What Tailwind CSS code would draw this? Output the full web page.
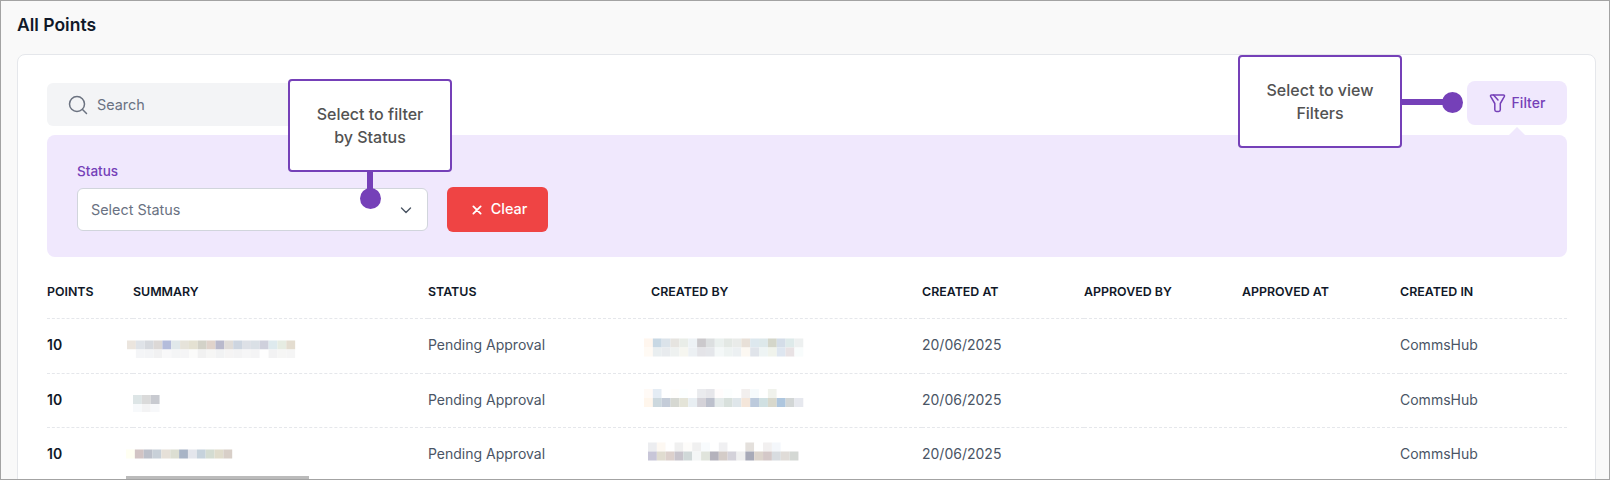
<!DOCTYPE html>
<html lang="en">
<head>
  <meta charset="UTF-8">
  <title>All Points</title>
  <script src="https://cdn.jsdelivr.net/npm/@tailwindcss/browser@4"></script>
</head>
<body class="font-[Inter,sans-serif]">
  <div class="relative h-[480px] overflow-hidden border border-[#a3a3a3] bg-[#f9f9f9]">
    <h1 class="pl-4 pt-3 text-[17.5px] leading-6 font-semibold text-gray-900">All Points</h1>

    <!-- card -->
    <div class="ml-4 mr-[13px] mt-[17px] h-[500px] rounded-lg border border-gray-200 bg-white pl-[29px] pr-[28px] pt-[28px]">
      <!-- toolbar -->
      <div class="flex h-[44px] items-start justify-between">
        <div class="flex h-[43px] w-[360px] items-center gap-[9px] rounded-md bg-gray-100 pl-[21px] text-[14.4px] text-gray-500">
          <svg class="h-[20px] w-[20px]" viewBox="0 0 20 20" fill="none" stroke="#6b7280" stroke-width="1.5" stroke-linecap="round"><circle cx="9" cy="9" r="7.5"/><path d="M14.5 14.5 18.5 18.5"/></svg>
          <span>Search</span>
        </div>
        <button class="relative -mt-[2px] flex h-[44px] w-[100px] items-center justify-center gap-[6px] rounded-lg bg-[#f0e8fd] text-sm font-medium text-[#7540b8]">
          <svg class="h-[20px] w-[17px]" viewBox="0 0 17 20" fill="none" stroke="#7540b8" stroke-width="1.5" stroke-linejoin="round" stroke-linecap="round"><path d="M2.500 2h12c.8 0 1.200.7.9 1.400L11.300 10.500V16.800c0 1-.8 1.700-1.700 1.700H7.500c-1 0-1.700-.7-1.700-1.700v-6.300L1.600 3.400C1.300 2.700 1.700 2 2.500 2Z"/><path d="M4.500 2 9 7"/></svg>
          <span>Filter</span>
          <span class="absolute left-[42px] top-[46px] h-0 w-0 border-x-[8px] border-b-[8px] border-x-transparent border-b-[#f0e8fd]"></span>
        </button>
      </div>

      <!-- filter panel -->
      <div class="mt-[8px] flex h-[122px] items-end gap-[19px] rounded-lg bg-[#f0e8fd] pb-[26px] pl-[30px]">
        <div>
          <label class="mb-[7px] block text-[13.5px] leading-5 font-medium text-[#7540b8]">Status</label>
          <div class="flex h-[43px] w-[351px] items-center justify-between rounded-md border border-gray-300 bg-white pl-[13px] pr-[14px] text-[14.4px] text-gray-500">
            <span>Select Status</span>
            <svg class="h-[14px] w-[14px]" viewBox="0 0 14 14" fill="none" stroke="#4b5563" stroke-width="1.4" stroke-linecap="round" stroke-linejoin="round"><path d="M2.500 5 7 9.500 11.500 5"/></svg>
          </div>
        </div>
        <button class="-mb-px flex h-[45px] w-[101px] items-center justify-center gap-[9px] rounded-md bg-[#ef4444] pl-[4px] pb-[2px] text-[14.4px] font-medium text-white">
          <svg class="mt-[2px] h-[10px] w-[10px]" viewBox="0 0 11 11" fill="none" stroke="#fff" stroke-width="2" stroke-linecap="round"><path d="M1.500 1.500 9.500 9.500M9.500 1.500 1.500 9.500"/></svg>
          <span>Clear</span>
        </button>
      </div>

      <!-- table -->
      <table class="mt-[8px] w-[1520px] table-fixed border-collapse text-sm text-gray-600">
        <colgroup>
          <col class="w-[86px]"><col class="w-[295px]"><col class="w-[223px]"><col class="w-[271px]"><col class="w-[162px]"><col class="w-[158px]"><col class="w-[158px]"><col class="w-[167px]">
        </colgroup>
        <thead>
          <tr class="h-[53px] border-b border-dashed border-gray-200 text-left text-[12.4px] font-semibold text-gray-900">
            <th class="pt-[2px] font-semibold">POINTS</th>
            <th class="pt-[2px] font-semibold">SUMMARY</th>
            <th class="pt-[2px] font-semibold">STATUS</th>
            <th class="pt-[2px] font-semibold">CREATED BY</th>
            <th class="pt-[2px] font-semibold">CREATED AT</th>
            <th class="pt-[2px] font-semibold">APPROVED BY</th>
            <th class="pt-[2px] font-semibold">APPROVED AT</th>
            <th class="pt-[2px] font-semibold">CREATED IN</th>
          </tr>
        </thead>
        <tbody>
          <tr class="h-[55px] border-b border-dashed border-gray-200">
            <td class="pb-[2px] font-semibold text-gray-900">10</td>
            <td><svg class="mosaic block h-[24px] w-[200px] -ml-[6px]" data-cell="s1"></svg></td>
            <td class="pb-[2px]">Pending Approval</td>
            <td><svg class="mosaic block h-[24px] w-[200px] -ml-[7px]" data-cell="c1"></svg></td>
            <td class="pb-[2px]">20/06/2025</td>
            <td></td>
            <td></td>
            <td class="pb-[2px]">CommsHub</td>
          </tr>
          <tr class="h-[54px] border-b border-dashed border-gray-200">
            <td class="font-semibold text-gray-900">10</td>
            <td><svg class="mosaic block h-[24px] w-[200px]" data-cell="s2"></svg></td>
            <td>Pending Approval</td>
            <td><svg class="mosaic block h-[24px] w-[200px] -ml-[7px]" data-cell="c2"></svg></td>
            <td>20/06/2025</td>
            <td></td>
            <td></td>
            <td>CommsHub</td>
          </tr>
          <tr class="h-[54px]">
            <td class="font-semibold text-gray-900">10</td>
            <td><svg class="mosaic block h-[24px] w-[200px] -ml-[7px]" data-cell="s3"></svg></td>
            <td>Pending Approval</td>
            <td><svg class="mosaic block h-[24px] w-[200px] -ml-[3px]" data-cell="c3"></svg></td>
            <td>20/06/2025</td>
            <td></td>
            <td></td>
            <td>CommsHub</td>
          </tr>
        </tbody>
      </table>
    </div>

    <!-- horizontal scrollbar thumb -->
    <div class="absolute bottom-0 left-[125px] h-[3px] w-[183px] bg-[#bbbbbb]"></div>

    <!-- callout: status -->
    <div class="absolute left-[287px] top-[78px] flex h-[93px] w-[164px] items-center justify-center rounded-[4px] border-2 border-[#7540b8] bg-white text-center text-base leading-[23px] font-medium text-neutral-600">Select to filter<br>by Status</div>
    <div class="absolute left-[366px] top-[170px] h-[20px] w-[6px] bg-[#7540b8]"></div>
    <div class="absolute left-[359px] top-[187px] h-[21px] w-[21px] rounded-full bg-[#7540b8]"></div>

    <!-- callout: filter -->
    <div class="absolute left-[1237px] top-[54px] flex h-[93px] w-[164px] items-center justify-center rounded-[4px] border-2 border-[#7540b8] bg-white text-center text-base leading-[23px] font-medium text-neutral-600">Select to view<br>Filters</div>
    <div class="absolute left-[1400px] top-[98px] h-[6px] w-[44px] bg-[#7540b8]"></div>
    <div class="absolute left-[1441px] top-[91px] h-[21px] w-[21px] rounded-full bg-[#7540b8]"></div>
  </div>

<script>
// blurred names in the table: y offset of each row of squares, then its colours
const cells = {
  s1: [
    {y: 6.5, c: ['ebe5de','dfe3e8','d6d9de','dcd8d6','b4bcdb','e0e8ea','e6e3da','e4e1d2','d3d2c8','e0d3cb','b9b9cc','e0dcd8','cdd5e0','dde0e6','dae0e6','cfd0dc','deeaee','e6ece2','e4ddd0']},
    {y: 15.5, c: ['fff','f4f5f7','f3f4f6','f1f1f2','f8f8f9','f4f5f6','f5f5f6','fbfbfa','f1f1f1','f6f6f5','f1f2f3','f5f4f4','f3f3f4','f6f6f7','f4f4f5','fefefe','f2f2f3','f6f6f5','f5f5f5']}
  ],
  s2: [
    {y: 7, c: ['dde5e6','dadada','c8cad0']},
    {y: 16, c: ['f7f9fb','f3f3f4','f7f8fa']}
  ],
  s3: [
    {y: 7.5, c: ['fffff2','d2c4c4','bcc0ca','c8d0d8','e6e0d8','dcded2','a8b4c6','e4e6ec','c6d2dc','d4dcd2','e0dccc','d8cfc8']}
  ],
  c1: [
    {y: 4.5, c: ['fff6ee','c8d8e4','dbe3ea','e6e4e0','e9ede8','edf2f5','cbc9cc','dcdfe0','eaf0ee','e3e8e4','e9ebe9','e8e0d8','dde8ee','dde8ea','d4d6ca','d4dde8','deeaea','edf0f0']},
    {y: 13.5, c: ['fffaf4','e9eef0','e8ebee','eef1f0','f6f6f0','ecf0f3','e4e4e8','e4e6ea','f4f8f8','eef3f2','ecf0f2','fcf8f2','e0e4ea','eef4f4','f0f3ec','dee6f0','e8e2e4','f8fcfc']}
  ],
  c2: [
    {y: 1, c: ['fffaf6','e4ecf4','fff','fffefc','fcffff','fff','eaebee','e6e6ea','fffcfc','fcfefe','fff','f2efee','f6fafc','fff','f0f2ec','fff','fff','fff']},
    {y: 10, c: ['fff6ec','ccd8de','c4ccd8','d6d8d2','e4e4d8','e8eef2','d4d2d8','bcc0cc','e4eaea','d8e0dc','dfe6ea','f4e6da','bccadc','d0e0e2','d8d8cc','aec6de','d2d6d6','e6e8ee']}
  ],
  c3: [
    {y: 0.5, c: ['ecedf0','fdf8f2','fff','f0f0f0','fdfcfa','f0f0f0','f8fbfd','fff','f0f0f2','fff','fff','e4e0dc','fff','f2f0f0','f4f7fb','fff','fff']},
    {y: 9.5, c: ['c8c6d8','e0dcd0','dcd0cc','c8c4cc','d0d8d8','f4f6f6','e0e4dc','b4b2bc','d4ccc8','d4d2da','f0f0f0','a8aab8','dcd4cc','d4c8c8','d8dce0','e0dcd8','d4d8d4']}
  ]
};

document.querySelectorAll('.mosaic').forEach(svg => {
  cells[svg.dataset.cell].forEach(row => {
    row.c.forEach((color, i) => {
      const r = document.createElementNS('http://www.w3.org/2000/svg', 'rect');
      r.setAttribute('x', i * 8.85);
      r.setAttribute('y', row.y);
      r.setAttribute('width', 8.85);
      r.setAttribute('height', 9);
      r.setAttribute('fill', '#' + color);
      svg.appendChild(r);
    });
  });
});
</script>
</body>
</html>
